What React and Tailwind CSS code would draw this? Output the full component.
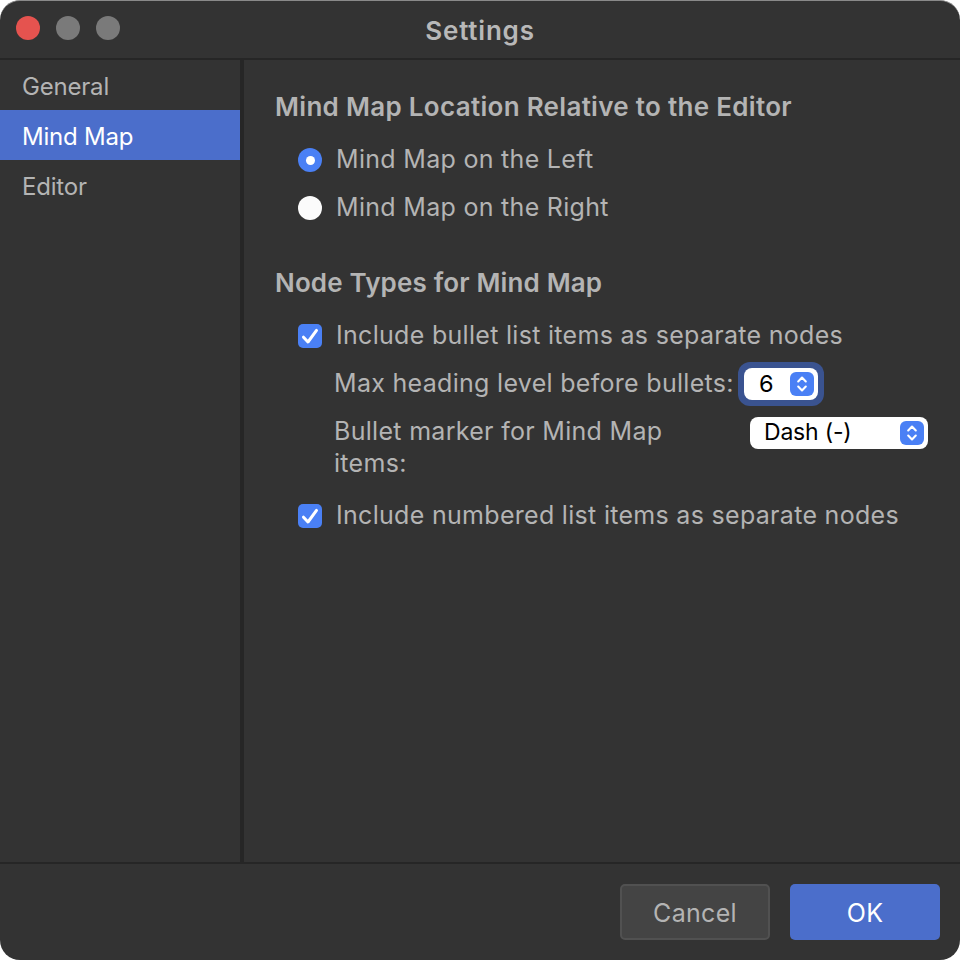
function Stepper() {
  return (
    <span className="flex h-[24px] w-[24px] shrink-0 items-center justify-center rounded-[6px] bg-[#4a80f5]">
      <svg width="12" height="18" viewBox="0 0 12 18" fill="none" stroke="#fff" strokeWidth="2.1" strokeLinecap="round" strokeLinejoin="round">
        <path d="M2.2 6.4 6 2.6l3.8 3.8" />
        <path d="M2.2 11.6 6 15.4l3.8-3.8" />
      </svg>
    </span>
  );
}

function CheckRow({ label, className = '' }) {
  return (
    <div className={`flex h-[32px] items-center ${className}`}>
      <span className="flex h-[24px] w-[24px] items-center justify-center rounded-[5px] bg-[#4a80f5]">
        <svg width="24" height="24" viewBox="0 0 24 24" fill="none" stroke="#fff" strokeWidth="3" strokeLinecap="round" strokeLinejoin="round">
          <path d="M5.5 13.2 10 18l8.5-11.6" />
        </svg>
      </span>
      <span className="ml-[14px]">{label}</span>
    </div>
  );
}

function RadioRow({ label, on }) {
  return (
    <div className="flex h-[32px] items-center">
      <span className={`flex h-[24px] w-[24px] items-center justify-center rounded-full ${on ? 'bg-[#4a80f5]' : 'bg-[#fbfbfb]'}`}>
        {on && <span className="h-[9px] w-[9px] rounded-full bg-white" />}
      </span>
      <span className="ml-[14px]">{label}</span>
    </div>
  );
}

export default function App() {
  return (
    <div className="h-[960px] w-[960px] bg-white font-['Inter',sans-serif] text-[25px] tracking-[0.3px] text-[#b4b4b4]">
      <div className="flex h-full flex-col overflow-hidden rounded-[20px] border-t border-[#8a8a8a] bg-[#333333]">
        {/* title bar */}
        <div className="relative flex h-[59px] shrink-0 items-center justify-center border-b-2 border-[#262626] pt-[1px]">
          <div className="absolute left-[16px] top-[15px] flex gap-[16px]">
            <span className="h-[24px] w-[24px] rounded-full bg-[#e5534f]" />
            <span className="h-[24px] w-[24px] rounded-full bg-[#7a7a7a]" />
            <span className="h-[24px] w-[24px] rounded-full bg-[#7a7a7a]" />
          </div>
          <span className="text-[26px] font-semibold tracking-[0.8px] text-[#b8b8b8]">Settings</span>
        </div>

        <div className="flex min-h-0 flex-1">
          {/* sidebar */}
          <div className="w-[244px] shrink-0 border-r-4 border-[#262626] text-[24px] tracking-[-0.2px]">
            <div className="flex h-[50px] items-center pl-[22px] pt-[4px]">General</div>
            <div className="flex h-[50px] items-center bg-[#4b6ecb] pl-[22px] pt-[4px] text-white">Mind Map</div>
            <div className="flex h-[50px] items-center pl-[22px] pt-[4px]">Editor</div>
          </div>

          {/* content */}
          <div className="min-w-0 flex-1 pl-[31px] pt-[29px]">
            <h2 className="text-[26px] font-semibold leading-[36px] tracking-[0.3px]">Mind Map Location Relative to the Editor</h2>
            <div className="mt-[19px] flex flex-col gap-[16px] pl-[23px]">
              <RadioRow label="Mind Map on the Left" on />
              <RadioRow label="Mind Map on the Right" />
            </div>

            <h2 className="mt-[41px] text-[26px] font-semibold leading-[36px] tracking-[0.15px]">Node Types for Mind Map</h2>
            <div className="mt-[19px] pl-[23px]">
              <CheckRow label="Include bullet list items as separate nodes" />
              <div className="mt-[13px] flex items-center pl-[36px]">
                <span className="w-[404px] shrink-0">Max heading level before bullets:</span>
                <span className="-my-[5px] flex h-[44px] w-[86px] shrink-0 items-center rounded-[12px] bg-[#3a5390] p-[6px]">
                  <span className="flex h-[32px] w-full items-center justify-between rounded-[8px] bg-white pl-[15px] pr-[4px] text-[23.5px] tracking-normal text-black">
                    6<Stepper />
                  </span>
                </span>
              </div>
              <div className="mt-[12px] flex items-start pl-[36px]">
                <span className="w-[416px] shrink-0 pr-[60px] leading-[32px]">Bullet marker for Mind Map items:</span>
                <span className="mt-[2px] flex h-[32px] w-[178px] shrink-0 items-center justify-between rounded-[8px] bg-white pl-[14px] pr-[4px] text-[23px] tracking-[-0.2px] text-black">
                  Dash (-)<Stepper />
                </span>
              </div>
              <CheckRow label="Include numbered list items as separate nodes" className="mt-[21px]" />
            </div>
          </div>
        </div>

        {/* footer */}
        <div className="flex h-[98px] shrink-0 items-start justify-end gap-[20px] border-t-2 border-[#262626] pr-[20px] pt-[20px]">
          <button className="h-[56px] w-[150px] rounded-[5px] border-2 border-[#515151] bg-[#444444] pt-[3px] text-[#b4b4b4]">Cancel</button>
          <button className="h-[56px] w-[150px] rounded-[5px] bg-[#4b6ecb] pt-[3px] text-white">OK</button>
        </div>
      </div>
    </div>
  );
}
